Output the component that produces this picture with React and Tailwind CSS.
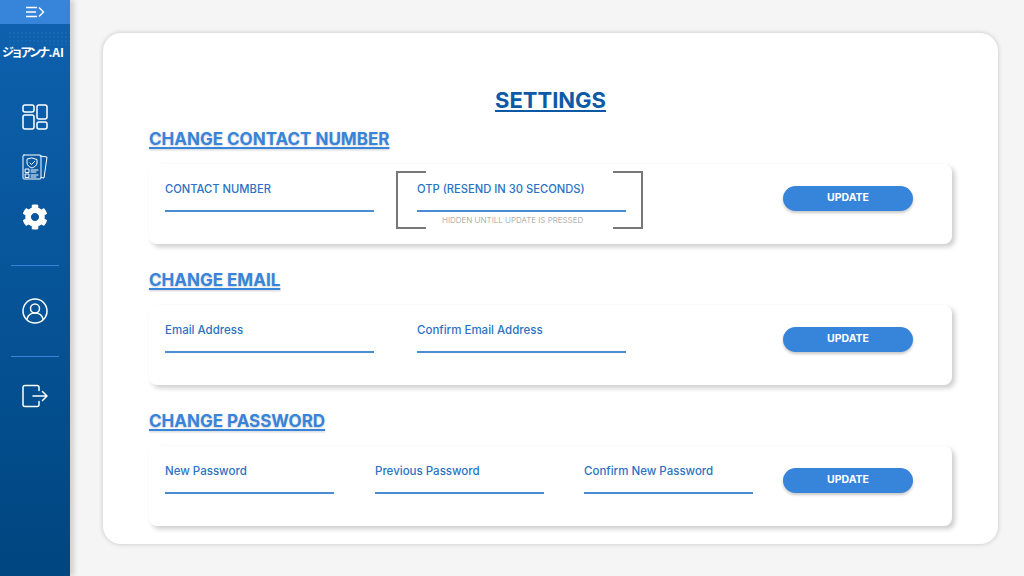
import { FaCog } from "react-icons/fa";

const font = { fontFamily: '"Inter", "Noto Sans", sans-serif' };

function Field({ label, width = "w-[209px]", className = "", textSize = "text-[11.5px]" }) {
  return (
    <div className={`${width} ${className} shrink-0`}>
      <div className={`h-[48px] border-b-2 border-[#4a8bd4] pt-[18px] ${textSize} font-medium leading-[14px] text-[#2a72c4]`}>
        {label}
      </div>
    </div>
  );
}

function UpdateButton() {
  return (
    <button className="mt-[22px] ml-auto mr-[39px] h-[25px] w-[130px] shrink-0 rounded-full bg-[#3784db] pb-px text-[10.5px] font-bold text-white shadow-[0_2px_3px_rgba(0,0,0,0.22)]">
      UPDATE
    </button>
  );
}

function Section({ title, children }) {
  return (
    <section className="mt-[13px] h-[128px]">
      <h2 className="h-[36px] text-[17px] font-bold leading-[22px] text-[#3784db] underline decoration-[1.5px] underline-offset-2 [text-shadow:0_1px_2px_rgba(0,0,0,0.2)]">
        {title}
      </h2>
      <div className="relative flex h-[80px] rounded-[8px] bg-white pl-4 shadow-[3px_3px_5px_rgba(0,0,0,0.2)]">
        {children}
      </div>
    </section>
  );
}

function Bracket() {
  const line = "absolute w-[30px] border-[#777777]";
  return (
    <div className="absolute left-[247px] top-[7px] h-[58px] w-[247px] border-x-2 border-[#777777]">
      <span className={`${line} -left-[2px] top-0 border-t-2`} />
      <span className={`${line} -right-[2px] top-0 border-t-2`} />
      <span className={`${line} -left-[2px] bottom-0 border-b-2`} />
      <span className={`${line} -right-[2px] bottom-0 border-b-2`} />
      <p className="absolute left-[44px] top-[44px] w-[140px] whitespace-nowrap text-center text-[8px] font-light leading-[10px] text-[#999999]">
        HIDDEN UNTILL UPDATE IS PRESSED
      </p>
    </div>
  );
}

function NavIcon({ children, className = "" }) {
  return (
    <svg
      viewBox="0 0 26 26"
      fill="none"
      stroke="white"
      strokeWidth="1.5"
      strokeLinecap="round"
      strokeLinejoin="round"
      className={`h-[26px] w-[26px] ${className}`}
    >
      {children}
    </svg>
  );
}

function Sidebar() {
  return (
    <aside className="relative z-10 flex h-[576px] w-[70px] shrink-0 flex-col items-center bg-gradient-to-b from-[#0f62b0] to-[#004680] shadow-[4px_0_5px_rgba(0,0,0,0.15)]">
      <div className="flex h-[24px] w-full items-center justify-center bg-[#3784db]">
        <svg viewBox="0 0 20 12" fill="none" stroke="white" strokeWidth="1.4" className="h-[12px] w-[20px]">
          <path d="M1 1.500h11M1 6h10M1 10.500h11M14 1.500L18.500 6L14 10.500" />
        </svg>
      </div>
      {/* faint dots behind the logo */}
      <div className="absolute left-[8px] top-[31px] h-[14px] w-[62px] bg-[radial-gradient(rgba(255,255,255,0.14)_0.5px,transparent_0.8px)] bg-[length:4px_4px]" />
      <div className="mt-[19px] flex h-[18px] w-full justify-end pr-[6px]">
        <span
          className="whitespace-nowrap text-[12px] font-bold leading-[18px] text-white"
          style={{ fontFamily: '"Noto Sans CJK JP", sans-serif' }}
        >
          <span className="tracking-[-2.8px]">ジョアンナ</span>
          <span className="ml-px">.AI</span>
        </span>
      </div>
      <NavIcon className="mt-[43px]">
        <rect x="1" y="1" width="11" height="7" rx="2" />
        <rect x="1" y="11" width="11" height="14" rx="2" />
        <rect x="15" y="1" width="10" height="14" rx="2" />
        <rect x="15" y="18" width="10" height="7" rx="2" />
      </NavIcon>
      <NavIcon className="mt-[24px]">
        <g strokeWidth="1">
          <path d="M18 2l7 1-3 21-3-.5" />
          <rect x="1" y="1" width="18" height="24" rx="1" />
          <path d="M10 4l5 1.500v3.500c0 2.500-2.500 4-5 5-2.500-1-5-2.500-5-5V5.500z" />
          <path d="M8 9l1.500 1.500L12.500 7.500" />
          <rect x="3.500" y="15" width="3.500" height="3.500" />
          <rect x="3.500" y="20" width="3.500" height="3.500" />
          <path d="M9 16h7M9 18h5M9 21h7M9 23h5" />
        </g>
      </NavIcon>
      <FaCog size={26} color="white" className="mt-[24px]" />
      <div className="mt-[35px] h-px w-[48px] bg-[#3784db]" />
      <NavIcon className="mt-[32px]">
        <circle cx="13" cy="13" r="12" />
        <circle cx="13" cy="10.500" r="4.500" />
        <path d="M5 21c1-4 4-6 8-6s7 2 8 6" />
      </NavIcon>
      <div className="mt-[32px] h-px w-[48px] bg-[#3784db]" />
      <NavIcon className="mt-[27px]">
        <path d="M17 6.500V3.500A2 2 0 0 0 15 1.500H3A2 2 0 0 0 1 3.500v17a2 2 0 0 0 2 2h12a2 2 0 0 0 2-2V17.500" />
        <path d="M11 12h14M20.500 7.500L25 12l-4.500 4.500" />
      </NavIcon>
    </aside>
  );
}

export default function App() {
  return (
    <div className="flex h-[576px] w-[1024px] overflow-hidden bg-[#f5f5f5]" style={font}>
      <Sidebar />
      <main className="flex-1 pl-[33px] pt-[33px]">
        <div className="h-[511px] w-[895px] rounded-[18px] bg-white px-[46px] pt-[54px] shadow-[0_0_5px_rgba(0,0,0,0.2)]">
          <h1 className="h-[28px] text-center text-[22px] font-bold leading-[26px] text-[#0c5aa6] underline decoration-2 underline-offset-2">
            SETTINGS
          </h1>
          <Section title="CHANGE CONTACT NUMBER">
            <Field label="CONTACT NUMBER" textSize="text-[11.2px]" />
            <Field label="OTP (RESEND IN 30 SECONDS)" textSize="text-[11.2px]" className="ml-[43px]" />
            <Bracket />
            <UpdateButton />
          </Section>
          <Section title="CHANGE EMAIL">
            <Field label="Email Address" />
            <Field label="Confirm Email Address" className="ml-[43px]" />
            <UpdateButton />
          </Section>
          <Section title="CHANGE PASSWORD">
            <Field label="New Password" width="w-[169px]" />
            <Field label="Previous Password" width="w-[169px]" className="ml-[41px]" />
            <Field label="Confirm New Password" width="w-[169px]" className="ml-[40px]" />
            <UpdateButton />
          </Section>
        </div>
      </main>
    </div>
  );
}
